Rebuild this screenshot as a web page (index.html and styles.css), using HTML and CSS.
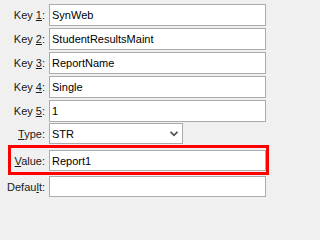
FILE: index.html
```html
<!DOCTYPE html>
<html>
<head>
<meta charset="utf-8">
<link rel="stylesheet" href="styles.css">
</head>
<body>
<div class="form">
  <div class="row"><label class="lbl">Key <u>1</u>:</label><div class="field">SynWeb</div></div>
  <div class="row"><label class="lbl">Key <u>2</u>:</label><div class="field">StudentResultsMaint</div></div>
  <div class="row"><label class="lbl">Key <u>3</u>:</label><div class="field">ReportName</div></div>
  <div class="row"><label class="lbl">Key <u>4</u>:</label><div class="field">Single</div></div>
  <div class="row"><label class="lbl">Key <u>5</u>:</label><div class="field">1</div></div>
  <div class="row row-type"><label class="lbl"><u>T</u>ype:</label><div class="combo"><span>STR</span><svg class="chev" width="8" height="6" viewBox="0 0 8 6"><path d="M0.5 0.8 L4 4.3 L7.5 0.8" fill="none" stroke="#505050" stroke-width="1.8"/></svg></div></div>
  <div class="row row-value"><div class="highlight"></div><label class="lbl"><u>V</u>alue:</label><div class="field">Report1</div></div>
  <div class="row row-default"><label class="lbl">Defau<u>l</u>t:</label><div class="field"></div></div>
</div>
</body>
</html>
```
FILE: styles.css
```css
html, body {
  margin: 0;
  padding: 0;
  background: #f0f0f0;
  font-family: "Liberation Sans", Arial, sans-serif;
  font-size: 11px;
  color: #000;
}
.form {
  display: flex;
  flex-direction: column;
  gap: 2px;
  padding-top: 4px;
  width: 271px;
}
.row {
  display: flex;
  align-items: center;
  height: 22px;
  position: relative;
}
.lbl {
  width: 45px;
  text-align: right;
  margin-right: 4px;
  white-space: nowrap;
  color: #1a1a1a;
}
.lbl u {
  text-decoration-thickness: 1px;
  text-underline-offset: 1px;
}
.field {
  box-sizing: border-box;
  width: 217px;
  height: 100%;
  background: #fff;
  border: 1px solid #ababab;
  padding-left: 2px;
  display: flex;
  align-items: center;
  white-space: nowrap;
}
.row-type {
  height: 21px;
  margin-top: -1px;
}
.combo {
  box-sizing: border-box;
  width: 134px;
  height: 100%;
  background: #fff;
  border: 1px solid #ababab;
  padding-left: 2px;
  padding-right: 4px;
  display: flex;
  align-items: center;
  justify-content: space-between;
}
.chev {
  margin-top: 1px;
}
.row-value {
  height: 21px;
  margin-top: 4px;
}
.row-default {
  height: 21px;
  margin-top: 3px;
}
.highlight {
  position: absolute;
  left: 8px;
  top: -5px;
  width: 261px;
  height: 30px;
  box-sizing: border-box;
  border: 3px solid #ff0000;
  pointer-events: none;
}
```
